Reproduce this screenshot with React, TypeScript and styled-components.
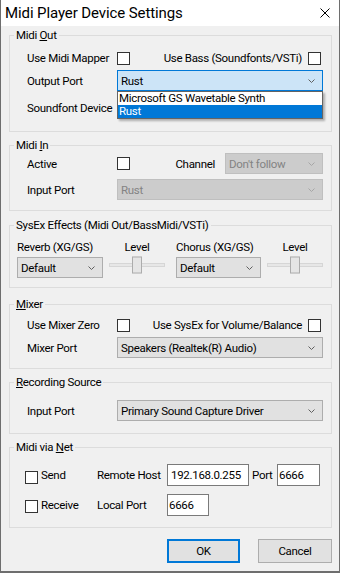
import styled, { createGlobalStyle } from 'styled-components';

type ComboState = 'normal' | 'focus' | 'disabled';

const GlobalStyle = createGlobalStyle`
  html, body {
    margin: 0;
    padding: 0;
    background: #f0f0f0;
  }
`;

const Window = styled.div`
  width: 340px;
  height: 573px;
  box-sizing: border-box;
  border: 1px solid #6e6e6e;
  border-top: none;
  border-bottom-width: 2px;
  background: #f0f0f0;
  display: flex;
  flex-direction: column;
  font-family: Roboto, "Liberation Sans", sans-serif;
  font-size: 11.5px;
  letter-spacing: -0.3px;
  color: #000;
  overflow: hidden;
`;

const TitleBar = styled.div`
  height: 26px;
  flex: none;
  background: #ffffff;
  display: flex;
  align-items: center;
  justify-content: space-between;
  padding: 0 9px 0 4px;
`;

const Title = styled.div`
  font-size: 15px;
  line-height: 18px;
  letter-spacing: -0.1px;
`;

const Body = styled.div`
  display: flex;
  flex-direction: column;
  padding: 2px 7px 0 8px;
`;

const GroupBox = styled.fieldset<{ $h: number; $mt?: number }>`
  margin: ${(p) => p.$mt ?? 0}px 0 0;
  padding: 0;
  min-width: 0;
  height: ${(p) => p.$h}px;
  box-sizing: border-box;
  border: 1px solid #dcdcdc;
`;

const Legend = styled.legend`
  margin-left: 4px;
  padding: 0 2px;
  line-height: 15px;
`;

const AccessKey = styled.span`
  text-decoration: underline;
`;

const GroupContent = styled.div<{ $pl: number }>`
  display: flex;
  flex-direction: column;
  padding: 0 8px 0 ${(p) => p.$pl}px;
`;

const Row = styled.div<{ $h: number; $mt?: number }>`
  display: flex;
  align-items: center;
  height: ${(p) => p.$h}px;
  margin-top: ${(p) => p.$mt ?? 0}px;
  white-space: nowrap;
`;

const FieldLabel = styled.span<{ $w: number }>`
  width: ${(p) => p.$w}px;
  flex: none;
`;

const RightPair = styled.div`
  margin-left: auto;
  display: flex;
  align-items: center;
  gap: 6px;
  padding-right: 2px;
`;

const ChannelLabel = styled.span`
  margin-left: auto;
  margin-right: 10px;
`;

const CheckBox = styled.span<{ $drop?: number }>`
  display: block;
  flex: none;
  width: 13px;
  height: 13px;
  box-sizing: border-box;
  border: 1px solid #333333;
  background: #ffffff;
  margin-top: ${(p) => p.$drop ?? 0}px;
`;

const comboColors: Record<ComboState, { bg: string; border: string; fg: string; arrow: string }> = {
  normal: { bg: '#e1e1e1', border: '#adadad', fg: '#000000', arrow: '#606060' },
  focus: { bg: '#cce4f7', border: '#0078d7', fg: '#000000', arrow: '#606060' },
  disabled: { bg: '#cccccc', border: '#bfbfbf', fg: '#838383', arrow: '#a6a6a6' },
};

const ComboBox = styled.div<{ $w?: number; $state: ComboState }>`
  position: relative;
  box-sizing: border-box;
  height: 21px;
  width: ${(p) => (p.$w ? `${p.$w}px` : 'auto')};
  flex: ${(p) => (p.$w ? 'none' : '1')};
  display: flex;
  align-items: center;
  justify-content: space-between;
  padding: 0 7px 0 3px;
  border: 1px solid ${(p) => comboColors[p.$state].border};
  background: ${(p) => comboColors[p.$state].bg};
  color: ${(p) => comboColors[p.$state].fg};
  white-space: nowrap;

  svg {
    flex: none;
    color: ${(p) => comboColors[p.$state].arrow};
  }
`;

const DropList = styled.div`
  position: absolute;
  z-index: 5;
  top: calc(100% + 1px);
  left: -1px;
  width: calc(100% + 2px);
  box-sizing: border-box;
  border: 1px solid #646464;
  background: #ffffff;
  box-shadow: 2px 2px 2px rgba(0, 0, 0, 0.28);
`;

const DropItem = styled.div<{ $selected?: boolean }>`
  height: 13px;
  line-height: 13px;
  padding-left: 1px;
  background: ${(p) => (p.$selected ? '#0078d7' : '#ffffff')};
  color: ${(p) => (p.$selected ? '#ffffff' : '#000000')};
`;

const EffectRow = styled.div`
  display: flex;
  margin-top: 7px;
`;

const EffectCell = styled.div<{ $w: number; $ml?: number }>`
  display: flex;
  flex-direction: column;
  gap: 2px;
  width: ${(p) => p.$w}px;
  margin-left: ${(p) => p.$ml ?? 0}px;
  flex: none;
`;

const EffectLabel = styled.div<{ $center?: boolean }>`
  height: 15px;
  line-height: 15px;
  white-space: nowrap;
  text-align: ${(p) => (p.$center ? 'center' : 'left')};
`;

const SliderArea = styled.div`
  height: 21px;
  padding-top: 6px;
  box-sizing: border-box;
`;

const SliderTrack = styled.div`
  position: relative;
  height: 4px;
  box-sizing: border-box;
  border: 1px solid #d6d6d6;
  background: #e7e7e7;
`;

const SliderThumb = styled.div`
  position: absolute;
  left: 50%;
  top: 50%;
  transform: translate(-50%, -50%);
  width: 10px;
  height: 17px;
  box-sizing: border-box;
  border: 1px solid #acacac;
  background: #e5e5e5;
`;

const NetCheck = styled.label`
  display: flex;
  align-items: center;
  gap: 3px;
  width: 72px;
  flex: none;
`;

const TextBox = styled.div<{ $w: number; $pl?: number }>`
  box-sizing: border-box;
  width: ${(p) => p.$w}px;
  height: 22px;
  flex: none;
  display: flex;
  align-items: center;
  padding-left: ${(p) => p.$pl ?? 1}px;
  border: 1px solid #7a7a7a;
  background: #ffffff;
`;

const PortLabel = styled.span`
  margin-left: 3px;
  width: 25px;
  flex: none;
`;

const ButtonBar = styled.div`
  display: flex;
  justify-content: flex-end;
  gap: 18px;
  margin-top: 11px;
`;

const DialogButton = styled.button<{ $w: number; $default?: boolean }>`
  width: ${(p) => p.$w}px;
  height: 24px;
  box-sizing: border-box;
  padding: 0;
  font-family: inherit;
  font-size: inherit;
  letter-spacing: inherit;
  color: #000;
  background: #e1e1e1;
  border: ${(p) => (p.$default ? '2px solid #0078d7' : '1px solid #adadad')};
  border-radius: 0;
`;

function Chevron() {
  return (
    <svg width="7" height="4" viewBox="0 0 7 4">
      <path d="M0.5 0.5 L3.5 3.5 L6.5 0.5" fill="none" stroke="currentColor" strokeWidth="1" />
    </svg>
  );
}

function Combo({ value, state = 'normal', w, children }: { value: string; state?: ComboState; w?: number; children?: React.ReactNode }) {
  return (
    <ComboBox $state={state} $w={w}>
      <span>{value}</span>
      <Chevron />
      {children}
    </ComboBox>
  );
}

function Slider() {
  return (
    <SliderArea>
      <SliderTrack>
        <SliderThumb />
      </SliderTrack>
    </SliderArea>
  );
}

export default function App() {
  return (
    <>
      <GlobalStyle />
      <Window>
        <TitleBar>
          <Title>Midi Player Device Settings</Title>
          <svg width="10" height="10" viewBox="0 0 10 10">
            <path d="M0.5 0.5 L9.5 9.5 M9.5 0.5 L0.5 9.5" stroke="#000" strokeWidth="1" />
          </svg>
        </TitleBar>

        <Body>
          <GroupBox $h={104}>
            <Legend>
              Midi <AccessKey>O</AccessKey>ut
            </Legend>
            <GroupContent $pl={17}>
              <Row $h={20} $mt={5}>
                <FieldLabel $w={90}>Use Midi Mapper</FieldLabel>
                <CheckBox />
                <RightPair>
                  <span>Use Bass (Soundfonts/VSTi)</span>
                  <CheckBox />
                </RightPair>
              </Row>
              <Row $h={21} $mt={2}>
                <FieldLabel $w={90}>Output Port</FieldLabel>
                <Combo value="Rust" state="focus">
                  <DropList>
                    <DropItem>Microsoft GS Wavetable Synth</DropItem>
                    <DropItem $selected>Rust</DropItem>
                  </DropList>
                </Combo>
              </Row>
              <Row $h={21} $mt={6}>
                <FieldLabel $w={90}>Soundfont Device</FieldLabel>
                <Combo value="" />
              </Row>
            </GroupContent>
          </GroupBox>

          <GroupBox $h={73} $mt={6}>
            <Legend>
              Midi <AccessKey>I</AccessKey>n
            </Legend>
            <GroupContent $pl={17}>
              <Row $h={21}>
                <FieldLabel $w={90}>Active</FieldLabel>
                <CheckBox />
                <ChannelLabel>Channel</ChannelLabel>
                <Combo value="Don't follow" state="disabled" w={98} />
              </Row>
              <Row $h={21} $mt={5}>
                <FieldLabel $w={90}>Input Port</FieldLabel>
                <Combo value="Rust" state="disabled" />
              </Row>
            </GroupContent>
          </GroupBox>

          <GroupBox $h={70} $mt={7}>
            <Legend>SysEx Effects (Midi Out/BassMidi/VSTi)</Legend>
            <GroupContent $pl={7}>
              <EffectRow>
                <EffectCell $w={86}>
                  <EffectLabel>Reverb (XG/GS)</EffectLabel>
                  <Combo value="Default" />
                </EffectCell>
                <EffectCell $w={56} $ml={6}>
                  <EffectLabel $center>Level</EffectLabel>
                  <Slider />
                </EffectCell>
                <EffectCell $w={85} $ml={11}>
                  <EffectLabel>Chorus (XG/GS)</EffectLabel>
                  <Combo value="Default" />
                </EffectCell>
                <EffectCell $w={56} $ml={6}>
                  <EffectLabel $center>Level</EffectLabel>
                  <Slider />
                </EffectCell>
              </EffectRow>
            </GroupContent>
          </GroupBox>

          <GroupBox $h={72} $mt={9}>
            <Legend>
              <AccessKey>M</AccessKey>ixer
            </Legend>
            <GroupContent $pl={17}>
              <Row $h={20} $mt={3}>
                <FieldLabel $w={90}>Use Mixer Zero</FieldLabel>
                <CheckBox />
                <RightPair>
                  <span>Use SysEx for Volume/Balance</span>
                  <CheckBox />
                </RightPair>
              </Row>
              <Row $h={21} $mt={2}>
                <FieldLabel $w={90}>Mixer Port</FieldLabel>
                <Combo value="Speakers (Realtek(R) Audio)" />
              </Row>
            </GroupContent>
          </GroupBox>

          <GroupBox $h={59} $mt={6}>
            <Legend>
              <AccessKey>R</AccessKey>ecording Source
            </Legend>
            <GroupContent $pl={17}>
              <Row $h={21} $mt={10}>
                <FieldLabel $w={90}>Input Port</FieldLabel>
                <Combo value="Primary Sound Capture Driver" />
              </Row>
            </GroupContent>
          </GroupBox>

          <GroupBox $h={88} $mt={6}>
            <Legend>
              Midi via <AccessKey>N</AccessKey>et
            </Legend>
            <GroupContent $pl={15}>
              <Row $h={22} $mt={9}>
                <NetCheck>
                  <CheckBox $drop={4} />
                  <span>Send</span>
                </NetCheck>
                <FieldLabel $w={70}>Remote Host</FieldLabel>
                <TextBox $w={82} $pl={3}>192.168.0.255</TextBox>
                <PortLabel>Port</PortLabel>
                <TextBox $w={43}>6666</TextBox>
              </Row>
              <Row $h={22} $mt={8}>
                <NetCheck>
                  <CheckBox $drop={3} />
                  <span>Receive</span>
                </NetCheck>
                <FieldLabel $w={70}>Local Port</FieldLabel>
                <TextBox $w={42}>6666</TextBox>
              </Row>
            </GroupContent>
          </GroupBox>

          <ButtonBar>
            <DialogButton $w={73} $default>
              OK
            </DialogButton>
            <DialogButton $w={74}>Cancel</DialogButton>
          </ButtonBar>
        </Body>
      </Window>
    </>
  );
}
